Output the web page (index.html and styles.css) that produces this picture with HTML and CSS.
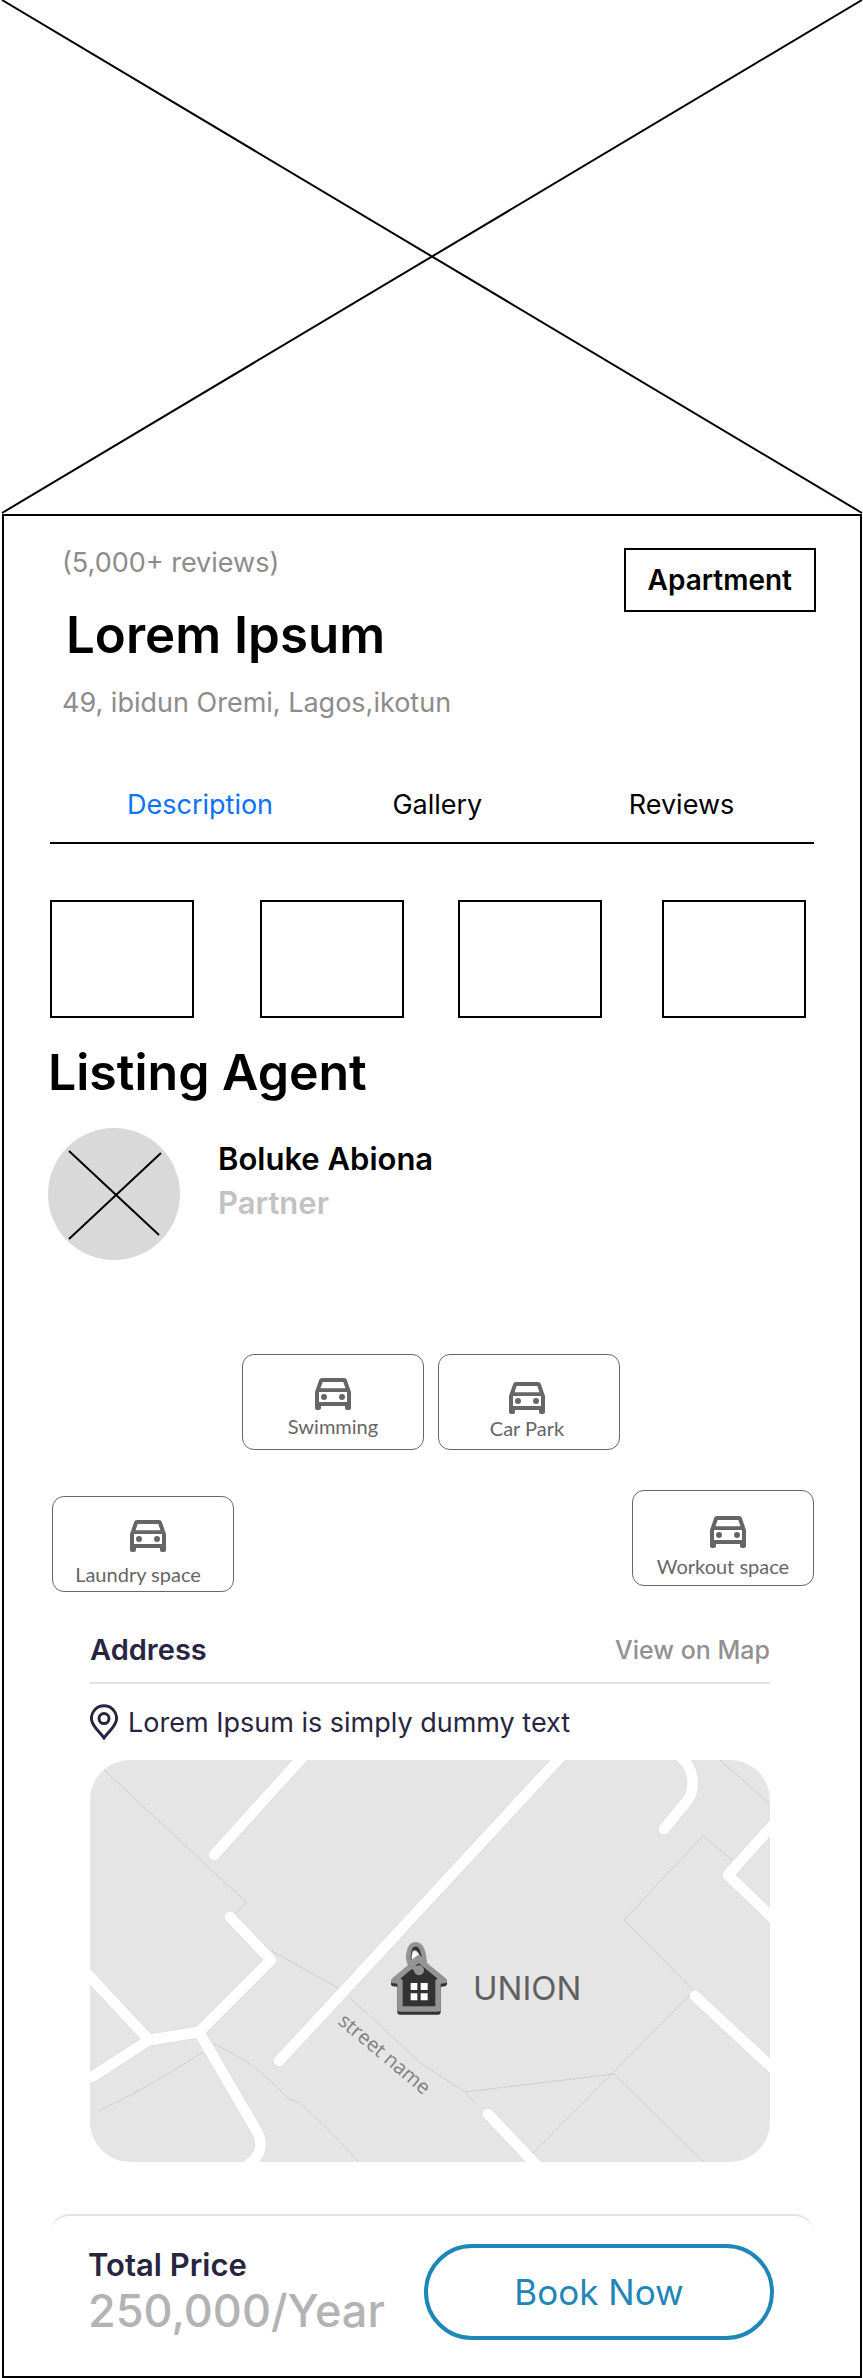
FILE: index.html
```html
<!DOCTYPE html>
<html lang="en">
<head>
<meta charset="utf-8">
<meta name="viewport" content="width=device-width, initial-scale=1">
<title>Lorem Ipsum – Apartment</title>
<link rel="stylesheet" href="styles.css">
</head>
<body>
<svg class="hero" viewBox="0 0 863 514" role="img" aria-label="Photo placeholder">
  <path d="M2 0 862 513M862 0 2 513"/>
</svg>

<svg width="0" height="0" class="defs" aria-hidden="true">
  <symbol id="car" viewBox="3 5 18 16">
    <path d="M18.92 6.01C18.72 5.42 18.16 5 17.5 5h-11c-.66 0-1.21.42-1.42 1.01L3 12v8c0 .55.45 1 1 1h1c.55 0 1-.45 1-1v-1h12v1c0 .55.45 1 1 1h1c.55 0 1-.45 1-1v-8l-2.08-5.99zM6.85 7h10.29l1.08 3.11H5.77L6.85 7zM19 17H5v-5h14v5z"/>
    <circle cx="7.5" cy="14.5" r="1.5"/><circle cx="16.5" cy="14.5" r="1.5"/>
  </symbol>
</svg>

<main class="panel">
  <header class="intro">
    <div>
      <p class="muted">(5,000+ reviews)</p>
      <h1 class="title">Lorem Ipsum</h1>
      <p class="muted">49, ibidun Oremi, Lagos,ikotun</p>
    </div>
    <span class="badge">Apartment</span>
  </header>

  <nav class="tabs">
    <button class="tab tab-active" type="button">Description</button>
    <button class="tab" type="button">Gallery</button>
    <button class="tab" type="button">Reviews</button>
  </nav>

  <div class="thumbs">
    <div class="thumb"></div><i></i><div class="thumb"></div><i></i><div class="thumb"></div><i></i><div class="thumb"></div>
  </div>

  <section class="agent">
    <h2 class="agent-heading">Listing Agent</h2>
    <div class="agent-row">
      <svg class="avatar" viewBox="0 0 132 132" role="img" aria-label="Agent photo placeholder">
        <circle cx="66" cy="66" r="66"/><path d="M21 23 111 107M21 111 113 25"/>
      </svg>
      <div class="agent-text">
        <p class="agent-name">Boluke Abiona</p>
        <p class="agent-role">Partner</p>
      </div>
    </div>
  </section>

  <section class="amenities">
    <div class="row-center">
      <div class="chip"><svg class="car"><use href="#car"/></svg><span>Swimming</span></div>
      <div class="chip chip-low"><svg class="car"><use href="#car"/></svg><span>Car Park</span></div>
    </div>
    <div class="row-ends">
      <div class="chip chip-laundry"><svg class="car"><use href="#car"/></svg><span>Laundry space</span></div>
      <div class="chip chip-workout"><svg class="car"><use href="#car"/></svg><span>Workout space</span></div>
    </div>
  </section>

  <section class="address">
    <div class="address-head">
      <h3 class="address-heading">Address</h3>
      <a class="map-link" href="#map">View on Map</a>
    </div>
    <p class="place">
      <svg class="pin" viewBox="0 0 28 36" aria-hidden="true">
        <path d="M14 34C10 28 1.4 22 1.4 14.4a12.6 12.6 0 0 1 25.2 0C26.6 22 18 28 14 34z"/>
        <circle cx="14" cy="14.6" r="5"/>
      </svg>
      Lorem Ipsum is simply dummy text
    </p>
    <svg class="map" id="map" viewBox="0 0 680 402" role="img" aria-label="Map">
      <rect width="680" height="402" fill="#e5e5e5"/>
      <g class="plots">
        <path d="M14 10 156 142 146 153M182 191 248 228M259 237 332 304 375 332 386 343M375 332 524 314M599 236 522 314 443 393M524 314 614 402M602 229 534 160 613 76 642 100M630 0 680 44M8 351Q47 334 113 292M124 284Q160 301 181 321L199 339 210 343Q240 370 269 402"/>
      </g>
      <g class="road-edge">
        <path id="roads" d="M124 95 219-10M189 301 477-10M140 157 181 200 109 272 59 280 2 317M59 280-10 206M109 272 166 370C174 383 171 396 159 404L150 412M574 69 597 41C605 31 605 12 594 0L588-6M690 57 638 115 690 165M605 236 690 315M398 354 453 412"/>
      </g>
      <use href="#roads" class="road"/>
      <text class="street" transform="translate(247 263) rotate(40)">street name</text>
      <g transform="translate(280 160) scale(.3333)" stroke-linejoin="round" stroke-linecap="round">
        <path d="M71 191 146 128 223 191 204 194V276H90V194z" fill="#333" stroke="#333" stroke-width="16"/>
        <path d="M71 182 146 119 223 182 204 184V267H90V184z" fill="#333" stroke="#949494" stroke-width="16"/>
        <path d="M121 132C112 108 120 84 134 84S156 100 162 122" fill="none" stroke="#333" stroke-width="14"/>
        <path d="M126 112Q129 96 136 96L147 110 128 125z" fill="#fff"/>
        <path d="M147 151C118 142 111 120 117 96C122 66 147 66 157 90Q163 105 163 120" fill="none" stroke="#949494" stroke-width="14"/>
        <path d="M126 128 146 112 164 124" fill="none" stroke="#949494" stroke-width="14"/>
        <circle cx="147" cy="151" r="15" fill="#949494"/>
        <path d="M122 189h20v21h-20zM152 189h21v21h-21zM122 220h20v21h-20zM152 220h21v21h-21z" fill="#fff"/>
      </g>
      <text class="district" x="383" y="240">UNION</text>
    </svg>
  </section>

  <footer class="booking">
    <div>
      <p class="total">Total Price</p>
      <p class="price">250,000/Year</p>
    </div>
    <button class="book" type="button">Book Now</button>
  </footer>
</main>
</body>
</html>
```
FILE: styles.css
```css
* { box-sizing: border-box; }

body {
  margin: 0;
  background: #fff;
  color: #000;
  font-family: Inter, "Open Sans", sans-serif;
}

h1, h2, h3, p { margin: 0; font-weight: 600; }
button { font-family: inherit; cursor: pointer; }

.hero { display: block; width: 100%; fill: none; stroke: #000; stroke-width: 2; }
.defs { display: block; }

.panel { margin: 0 1px 0 2px; border: 2px solid #000; }

.intro {
  display: flex;
  justify-content: space-between;
  align-items: flex-start;
  padding: 29px 44px 0 58px;
}
.muted { color: #8c8c8c; font-size: 27px; font-weight: 400; line-height: 36px; }
.title { margin: 24px 0 20px; padding-left: 4px; font-size: 51px; line-height: 60px; }
.badge {
  margin-top: 3px;
  padding: 1px 22px 0;
  border: 2px solid #000;
  font-size: 28px;
  font-weight: 600;
  line-height: 59px;
}

.tabs {
  display: grid;
  grid-template-columns: 265fr 236fr 185fr;
  margin: 66px 46px 0;
  padding: 0 0 19px 77px;
  border-bottom: 2px solid #000;
}
.tab {
  padding: 0;
  border: 0;
  background: none;
  color: #000;
  font-size: 27px;
  line-height: 36px;
  text-align: left;
}
.tab-active { color: #0a72ff; }

.thumbs {
  display: grid;
  grid-template-columns: 144fr 66fr 144fr 54fr 144fr 60fr 144fr;
  margin: 56px 54px 0 46px;
}
.thumb { height: 118px; border: 2px solid #000; }

.agent { padding: 24px 44px 0; }
.agent-heading { font-size: 50px; line-height: 60px; }
.agent-row { display: flex; gap: 38px; margin-top: 26px; }
.avatar { width: 132px; height: 132px; fill: #d9d9d9; stroke: none; }
.avatar path { stroke: #000; stroke-width: 2; }
.agent-text { padding-top: 9px; font-size: 31px; line-height: 44px; }
.agent-role { color: #c2c2c2; }

.amenities { padding: 94px 46px 0 48px; }
.row-center { display: flex; justify-content: center; gap: 14px; padding-right: 4px; }
.row-ends {
  display: flex;
  justify-content: space-between;
  align-items: flex-start;
  min-height: 102px;
  margin-top: 40px;
}
.chip {
  display: flex;
  flex-direction: column;
  align-items: center;
  gap: 4px;
  width: 182px;
  height: 96px;
  padding-top: 23px;
  border: 1px solid #666;
  border-radius: 12px;
  color: #666;
  font: 20px/24px Lato, sans-serif;
}
.car { flex: none; width: 36px; height: 32px; fill: #666; }
.chip-low { gap: 2px; padding-top: 27px; }
.chip-low .car, .chip-low span { margin-right: 4px; }
.chip-laundry { align-self: flex-end; gap: 10px; }
.chip-laundry span { margin-right: 10px; }
.chip-workout { gap: 6px; padding-top: 25px; }
.chip-laundry .car, .chip-workout .car { margin-left: 10px; }

.address { padding: 40px 90px 0 86px; color: #28263f; }
.address-head {
  display: flex;
  justify-content: space-between;
  align-items: center;
  padding-bottom: 14px;
  border-bottom: 2px solid #e2e2e2;
}
.address-heading { font-size: 29px; line-height: 36px; }
.map-link { color: #919191; font-size: 25px; font-weight: 500; text-decoration: none; }
.place {
  display: flex;
  gap: 10px;
  margin: 20px 0;
  font-size: 27px;
  font-weight: 400;
  line-height: 37px;
  height: 36px;
}
.pin { flex: none; width: 28px; height: 36px; fill: none; stroke: #28263f; stroke-width: 3; }

.map { display: block; width: 100%; border-radius: 40px; }
.plots { fill: none; stroke: #c3bfca; stroke-width: 1; stroke-dasharray: 2 1; }
.road, .road-edge { fill: none; stroke-linecap: round; stroke-linejoin: round; }
.road { stroke: #fff; stroke-width: 11; }
.road-edge { stroke: #d6d6d6; stroke-width: 12; }
.street { fill: #808080; font: 20px "Open Sans", sans-serif; }
.district { fill: #606060; font: 33px Inter, sans-serif; }

.booking {
  display: flex;
  justify-content: space-between;
  align-items: flex-start;
  margin: 52px 46px 0;
  padding: 28px 40px 36px 38px;
  border-top: 2px solid #e2e2e2;
  border-radius: 20px 20px 0 0;
}
.total { color: #28263f; font-size: 31px; line-height: 41px; }
.price { color: #b3b3b3; font-size: 45px; font-weight: 500; line-height: 51px; }
.book {
  width: 350px;
  height: 96px;
  border: 4px solid #1f86b8;
  border-radius: 48px;
  background: #fff;
  color: #1f86b8;
  font-size: 35px;
}
```
